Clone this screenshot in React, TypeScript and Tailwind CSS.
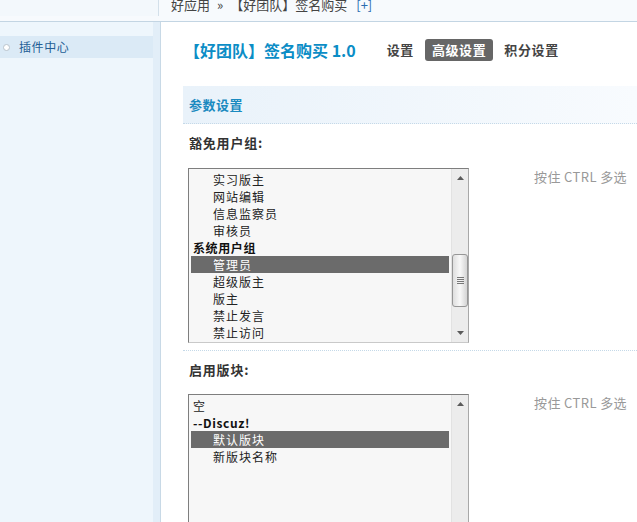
import React from "react";

type Item = { label: string; group?: boolean; indent?: boolean; selected?: boolean };

const userGroups: Item[] = [
  { label: "实习版主", indent: true },
  { label: "网站编辑", indent: true },
  { label: "信息监察员", indent: true },
  { label: "审核员", indent: true },
  { label: "系统用户组", group: true },
  { label: "管理员", indent: true, selected: true },
  { label: "超级版主", indent: true },
  { label: "版主", indent: true },
  { label: "禁止发言", indent: true },
  { label: "禁止访问", indent: true },
];

const forums: Item[] = [
  { label: "空" },
  { label: "--Discuz!", group: true },
  { label: "默认版块", indent: true, selected: true },
  { label: "新版块名称", indent: true },
];

function Arrow({ up }: { up?: boolean }) {
  return (
    <svg width="7" height="4" viewBox="0 0 7 4" className="block">
      {up ? <path d="M0 4 L3.5 0 L7 4 Z" fill="#5a5a5a" /> : <path d="M0 0 L7 0 L3.5 4 Z" fill="#5a5a5a" />}
    </svg>
  );
}

function ListBox({ items, thumb }: { items: Item[]; thumb: boolean }) {
  return (
    <div className="flex h-[175px] w-[281px] border border-[#7e7e7e] border-r-[#a8a8a8] border-b-[#c9c9c9] bg-[#f7f7f7]">
      <div className="flex-1 pt-[2px] pr-[2px] pl-[2px]">
        {items.map((it) => (
          <div
            key={it.label}
            className={`h-[17px] text-[12px] leading-[17px] ${it.indent ? "pl-[22px]" : "pl-[2px]"} ${
              it.group ? "font-bold text-[#111] tracking-[0.6px]" : "text-[#222] tracking-[1px]"
            } ${it.selected ? "bg-[#6b6b6b] text-white" : ""}`}
          >
            {it.label}
          </div>
        ))}
      </div>
      <div className="flex w-[17px] flex-col items-center border-l border-[#e2e2e2] bg-[#ececec]">
        <div className="mt-[7px]">
          <Arrow up />
        </div>
        {thumb && (
          <>
            <div className="mt-[74px] flex h-[53px] w-[16px] items-center justify-center rounded-[3px] border border-[#969696] bg-linear-to-r from-[#dedede] via-[#f8f8f8] to-[#d4d4d4]">
              <div className="flex flex-col gap-[1px]">
                <div className="h-px w-[7px] bg-[#777]" />
                <div className="h-px w-[7px] bg-[#777]" />
                <div className="h-px w-[7px] bg-[#777]" />
                <div className="h-px w-[7px] bg-[#777]" />
              </div>
            </div>
            <div className="mt-auto mb-[7px]">
              <Arrow />
            </div>
          </>
        )}
      </div>
    </div>
  );
}

export default function App() {
  return (
    <div
      className="h-[522px] w-[637px] overflow-hidden bg-white text-[#333]"
      style={{ fontFamily: '"Noto Sans CJK SC", "Noto Sans", sans-serif' }}
    >
      {/* top bar */}
      <div className="flex h-[22px] border-b border-[#c3d5e3] bg-[#f7fafd]">
        <div className="h-[16px] w-[159px] border-r border-[#d3e0ea] bg-[#f3f8fc]" />
        <div className="-mt-[3px] flex pl-[12px] text-[13px] leading-[16px] whitespace-nowrap text-[#444]">
          <span>好应用</span>
          <span className="mx-[7px]">&raquo;</span>
          <span>【好团队】签名购买</span>
          <span className="ml-[9px] text-[#2a6db0]">[+]</span>
        </div>
      </div>

      <div className="flex h-[500px]">
        {/* sidebar */}
        <div className="flex w-[161px] border-r border-[#c8d9e6]">
          <div className="w-[153px] bg-[#eef6fc] pt-[14px]">
            <div className="flex h-[22px] items-center bg-[#dbeaf6] pl-[3px] text-[12px] tracking-[0.6px] text-[#245e95]">
              <span className="mr-[9px] inline-block h-[7px] w-[7px] rounded-full border border-[#b9c3cc] bg-white" />
              插件中心
            </div>
          </div>
          <div className="w-[7px] bg-[#e2eef8]" />
        </div>

        {/* main */}
        <div className="flex-1 pl-[22px]">
          <div className="mt-[17px] flex h-[22px] items-center">
            <div className="pl-px text-[16px] font-bold text-[#0b8dc6]">【好团队】签名购买 1.0</div>
            <div className="ml-[31px] flex items-center text-[13px] font-bold tracking-[0.6px] text-[#444]">
              <span>设置</span>
              <span className="ml-[11px] flex h-[22px] items-center rounded-[3px] bg-[#666] px-[7px] text-white">
                高级设置
              </span>
              <span className="ml-[11px]">积分设置</span>
            </div>
          </div>

          <div className="mt-[25px] flex h-[38px] items-center border-b border-dotted border-[#c5d9e8] bg-linear-to-r from-[#e9f2fa] to-[#f8fbfe] pl-[6px] text-[13px] font-bold tracking-[0.5px] text-[#1a8ac0]">
            参数设置
          </div>

          <div className="flex h-[37px] items-center pl-[6px] text-[13px] font-bold tracking-[0.8px] text-[#333]">
            豁免用户组:
          </div>
          <div className="flex border-b border-dotted border-[#c5d9e8] pt-[7px] pb-[7px] pl-[5px]">
            <ListBox items={userGroups} thumb />
            <div className="ml-[65px] text-[13px] leading-[17px] tracking-[0.4px] whitespace-nowrap text-[#999]">
              按住 CTRL 多选
            </div>
          </div>

          <div className="flex h-[37px] items-center pl-[6px] text-[13px] font-bold tracking-[0.8px] text-[#333]">
            启用版块:
          </div>
          <div className="flex pt-[6px] pl-[5px]">
            <ListBox items={forums} thumb={false} />
            <div className="ml-[65px] text-[13px] leading-[17px] tracking-[0.4px] whitespace-nowrap text-[#999]">
              按住 CTRL 多选
            </div>
          </div>
        </div>
      </div>
    </div>
  );
}
